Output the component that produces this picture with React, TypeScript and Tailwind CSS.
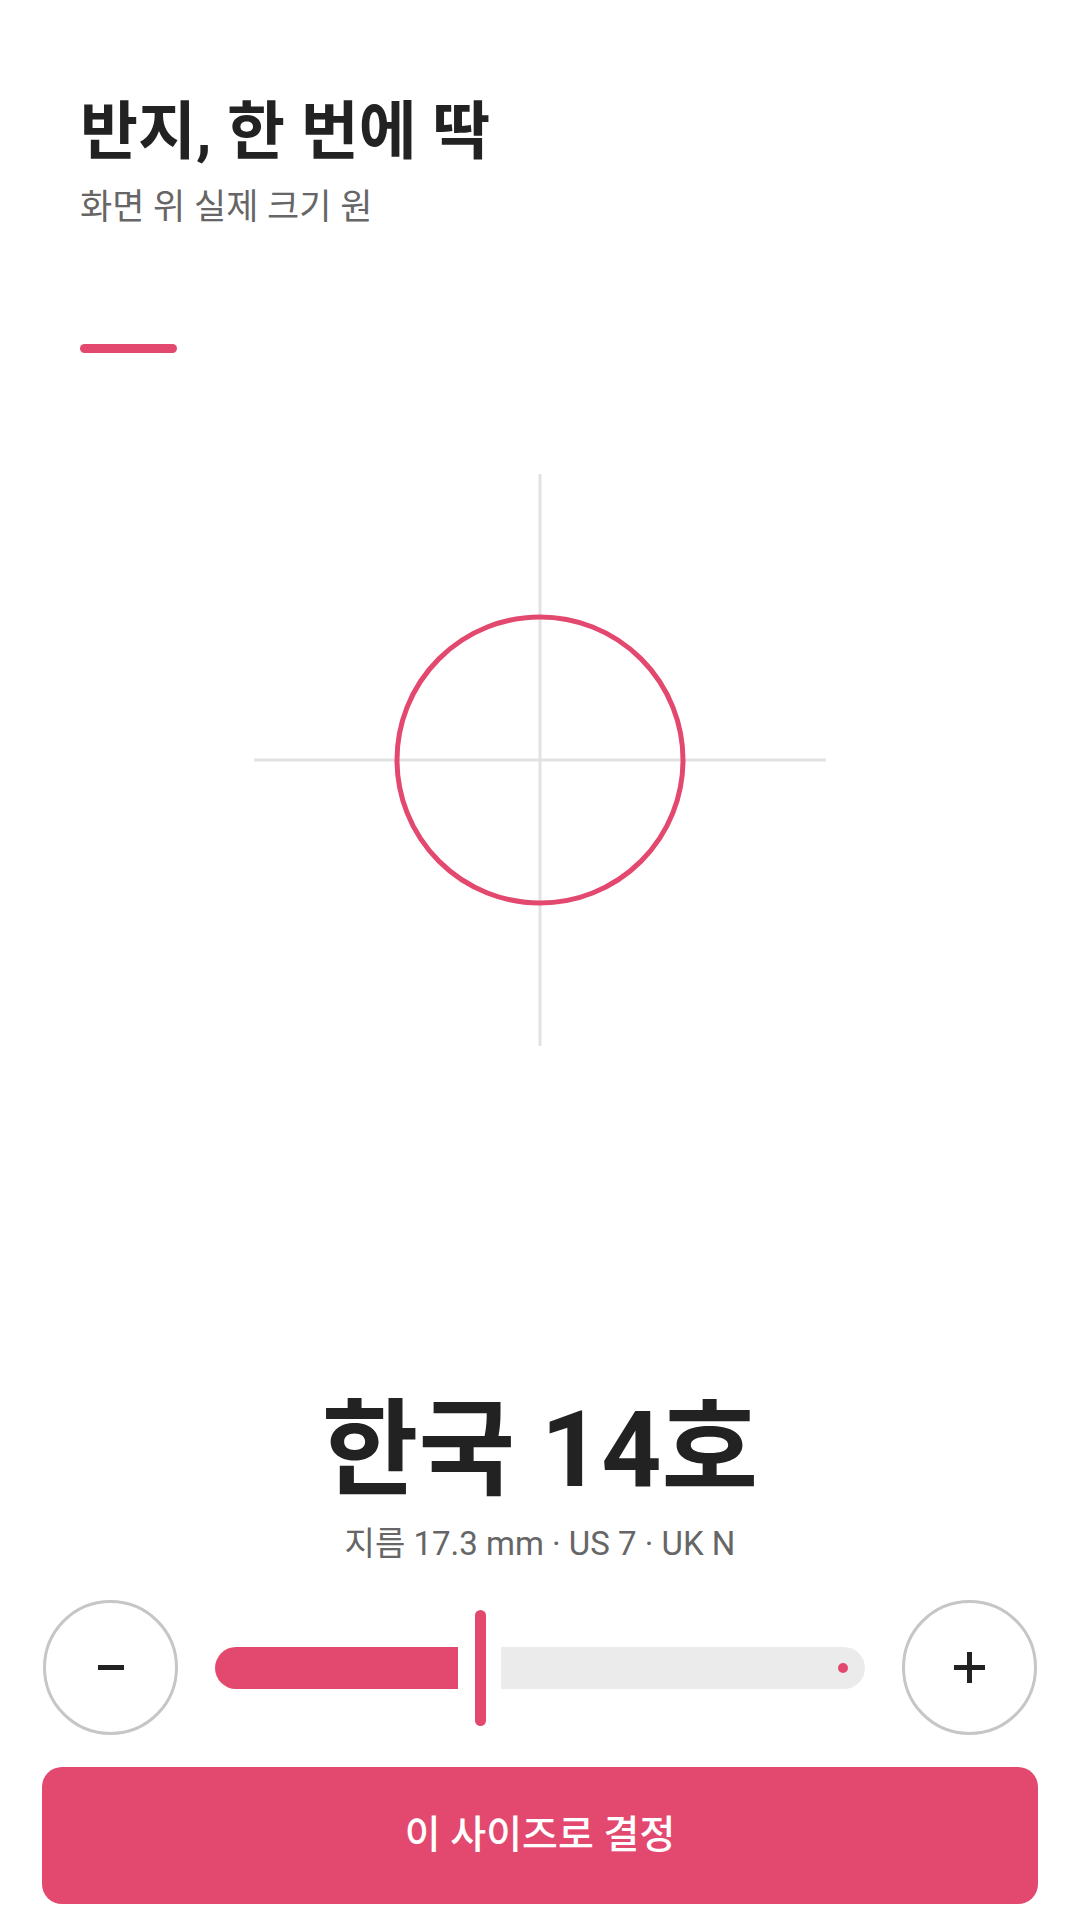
export default function App() {
  return (
    <div className="w-[1080px] h-[1920px] bg-white flex flex-col font-['Roboto','Noto_Sans_CJK_KR',sans-serif] text-[#222]">
      <header className="px-[80px] pt-[100px]">
        <h1 className="text-[63px] font-bold leading-none">반지, 한 번에 딱</h1>
        <p className="mt-[27px] text-[35px] leading-none text-[#666]">화면 위 실제 크기 원</p>
        <div className="mt-[119px] w-[97px] h-[9px] rounded-full bg-[#e3496f]" />
      </header>

      {/* ring preview */}
      <div className="flex justify-center pt-[119px]">
        <svg width="576" height="576" viewBox="0 0 576 576">
          <line x1="288" y1="2" x2="288" y2="574" stroke="#e2e2e2" strokeWidth="3" />
          <line x1="2" y1="288" x2="574" y2="288" stroke="#e2e2e2" strokeWidth="3" />
          <circle cx="288" cy="288" r="143" fill="none" stroke="#e3496f" strokeWidth="5" />
        </svg>
      </div>

      <div className="mt-auto flex flex-col items-center">
        <div className="text-[105px] font-bold leading-none">한국 14호</div>
        <div className="mt-[24px] text-[33px] leading-none text-[#666]">지름 17.3 mm · US 7 · UK N</div>
      </div>

      <div className="mt-[40px] flex items-center gap-[37px] px-[43px]">
        <button className="w-[135px] h-[135px] shrink-0 rounded-full border-[3px] border-[#c6c6c6] flex items-center justify-center">
          <span className="block w-[26px] h-[5px] bg-[#222]" />
        </button>
        <div className="flex-1 h-[116px] flex items-center">
          <div className="w-[243px] h-[42px] rounded-l-full rounded-r-[5px] bg-[#e3496f]" />
          <div className="ml-[17px] w-[11px] h-[116px] rounded-full bg-[#e3496f]" />
          <div className="ml-[15px] flex-1 h-[42px] rounded-l-[5px] rounded-r-full bg-[#ebebeb] flex items-center justify-end pr-[17px]">
            <span className="block w-[10px] h-[10px] rounded-full bg-[#e3496f]" />
          </div>
        </div>
        <button className="w-[135px] h-[135px] shrink-0 rounded-full border-[3px] border-[#c6c6c6] flex items-center justify-center relative">
          <span className="absolute w-[31px] h-[5px] bg-[#222]" />
          <span className="absolute w-[5px] h-[31px] bg-[#222]" />
        </button>
      </div>

      <div className="px-[42px] pt-[32px] pb-[16px]">
        <button className="w-full h-[137px] rounded-[20px] bg-[#e3496f] text-white text-[39px] font-medium">
          이 사이즈로 결정
        </button>
      </div>
    </div>
  );
}
